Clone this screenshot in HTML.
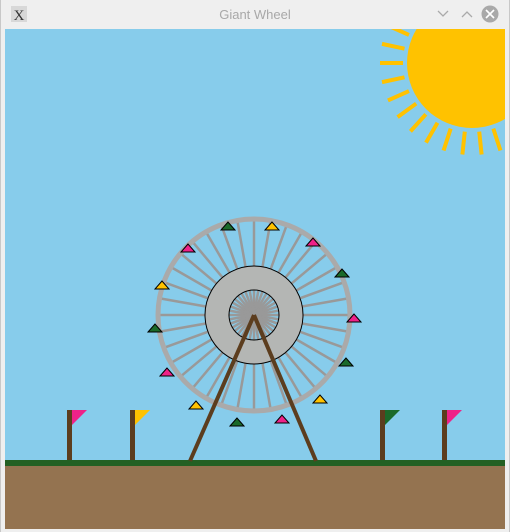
<!DOCTYPE html>
<html><head><meta charset="utf-8"><style>
html,body{margin:0;padding:0;width:510px;height:532px;overflow:hidden;background:#efefef;font-family:"Liberation Sans",sans-serif}
</style></head><body>
<svg width="510" height="532" viewBox="0 0 510 532" xmlns="http://www.w3.org/2000/svg">
<rect x="0" y="0" width="510" height="532" fill="#efefef"/>
<rect x="0" y="0" width="1" height="532" fill="#c8c8c8"/>
<rect x="509" y="0" width="1" height="532" fill="#c8c8c8"/>
<rect x="11" y="6" width="16" height="16" fill="#d8d8d8"/>
<text x="19" y="20" font-size="15" text-anchor="middle" font-family="Liberation Serif,serif" fill="#333">X</text>
<text x="255" y="19" font-size="13" text-anchor="middle" fill="#a8a8a8">Giant Wheel</text>
<path d="M438 11 L443 16 L448 11" stroke="#aaa" stroke-width="1.3" fill="none"/>
<path d="M462 17 L467 12 L472 17" stroke="#aaa" stroke-width="1.3" fill="none"/>
<circle cx="490" cy="14" r="8.5" fill="#a9a9a9"/>
<path d="M486 10 L494 18 M494 10 L486 18" stroke="#fff" stroke-width="1.6"/>
<svg x="5" y="29" width="500" height="500" viewBox="5 29 500 500">
<rect x="5" y="29" width="500" height="500" fill="#87cceb"/>
<!-- sun -->
<g stroke="#ffc200" stroke-width="4">
<line x1="380" y1="63" x2="403" y2="63" transform="rotate(24 472 63)"/>
<line x1="380" y1="63" x2="403" y2="63" transform="rotate(12 472 63)"/>
<line x1="380" y1="63" x2="403" y2="63"/>
<line x1="380" y1="63" x2="403" y2="63" transform="rotate(-12 472 63)"/>
<line x1="380" y1="63" x2="403" y2="63" transform="rotate(-24 472 63)"/>
<line x1="380" y1="63" x2="403" y2="63" transform="rotate(-36 472 63)"/>
<line x1="380" y1="63" x2="403" y2="63" transform="rotate(-48 472 63)"/>
<line x1="380" y1="63" x2="403" y2="63" transform="rotate(-60 472 63)"/>
<line x1="380" y1="63" x2="403" y2="63" transform="rotate(-72 472 63)"/>
<line x1="380" y1="63" x2="403" y2="63" transform="rotate(-84 472 63)"/>
<line x1="380" y1="63" x2="403" y2="63" transform="rotate(-96 472 63)"/>
<line x1="380" y1="63" x2="403" y2="63" transform="rotate(-108 472 63)"/>
<line x1="380" y1="63" x2="403" y2="63" transform="rotate(-120 472 63)"/>
</g>
<circle cx="472" cy="63" r="65" fill="#ffc200"/>
<!-- ground -->
<rect x="5" y="460" width="500" height="6" fill="#236023"/>
<rect x="5" y="466" width="500" height="63" fill="#947350"/>
<!-- flags -->
<g fill="#5c3d1e">
<rect x="67" y="410" width="5" height="50"/><rect x="130" y="410" width="5" height="50"/>
<rect x="380" y="410" width="5" height="50"/><rect x="442" y="410" width="5" height="50"/>
</g>
<polygon points="72,410 87,410 72,425" fill="#ee2288"/>
<polygon points="135,410 150,410 135,425" fill="#ffc200"/>
<polygon points="385,410 400,410 385,425" fill="#1a6a2a"/>
<polygon points="447,410 462,410 447,425" fill="#ee2288"/>
<!-- wheel -->
<g stroke="#999" stroke-width="2.5">
<line x1="254" y1="218" x2="254" y2="412" transform="rotate(0 254 315)"/>
<line x1="254" y1="218" x2="254" y2="412" transform="rotate(10 254 315)"/>
<line x1="254" y1="218" x2="254" y2="412" transform="rotate(20 254 315)"/>
<line x1="254" y1="218" x2="254" y2="412" transform="rotate(30 254 315)"/>
<line x1="254" y1="218" x2="254" y2="412" transform="rotate(40 254 315)"/>
<line x1="254" y1="218" x2="254" y2="412" transform="rotate(50 254 315)"/>
<line x1="254" y1="218" x2="254" y2="412" transform="rotate(60 254 315)"/>
<line x1="254" y1="218" x2="254" y2="412" transform="rotate(70 254 315)"/>
<line x1="254" y1="218" x2="254" y2="412" transform="rotate(80 254 315)"/>
<line x1="254" y1="218" x2="254" y2="412" transform="rotate(90 254 315)"/>
<line x1="254" y1="218" x2="254" y2="412" transform="rotate(100 254 315)"/>
<line x1="254" y1="218" x2="254" y2="412" transform="rotate(110 254 315)"/>
<line x1="254" y1="218" x2="254" y2="412" transform="rotate(120 254 315)"/>
<line x1="254" y1="218" x2="254" y2="412" transform="rotate(130 254 315)"/>
<line x1="254" y1="218" x2="254" y2="412" transform="rotate(140 254 315)"/>
<line x1="254" y1="218" x2="254" y2="412" transform="rotate(150 254 315)"/>
<line x1="254" y1="218" x2="254" y2="412" transform="rotate(160 254 315)"/>
<line x1="254" y1="218" x2="254" y2="412" transform="rotate(170 254 315)"/>
</g>
<circle cx="254" cy="315" r="96" fill="none" stroke="#aaa" stroke-width="5"/>
<path d="M254 266 a49 49 0 1 0 0.01 0 Z M254 290 a25 25 0 1 1 -0.01 0 Z" fill="#b4b6b4" fill-rule="evenodd" stroke="#000" stroke-width="1"/>
<g stroke="#5c3d1e" stroke-width="4">
<line x1="254" y1="315" x2="190" y2="461"/>
<line x1="254" y1="315" x2="316" y2="461"/>
</g>
<g stroke="#000" stroke-width="1">
<polygon points="228,222 221,230 235,230" fill="#1a6a2a"/>
<polygon points="272,222 265,230 279,230" fill="#ffc200"/>
<polygon points="313,238 306,246 320,246" fill="#ee2288"/>
<polygon points="342,269 335,277 349,277" fill="#1a6a2a"/>
<polygon points="354,314 347,322 361,322" fill="#ee2288"/>
<polygon points="346,358 339,366 353,366" fill="#1a6a2a"/>
<polygon points="320,395 313,403 327,403" fill="#ffc200"/>
<polygon points="282,415 275,423 289,423" fill="#ee2288"/>
<polygon points="237,418 230,426 244,426" fill="#1a6a2a"/>
<polygon points="196,401 189,409 203,409" fill="#ffc200"/>
<polygon points="167,368 160,376 174,376" fill="#ee2288"/>
<polygon points="155,324 148,332 162,332" fill="#1a6a2a"/>
<polygon points="162,281 155,289 169,289" fill="#ffc200"/>
<polygon points="188,244 181,252 195,252" fill="#ee2288"/>
</g>
</svg>
</svg>
</body></html>
